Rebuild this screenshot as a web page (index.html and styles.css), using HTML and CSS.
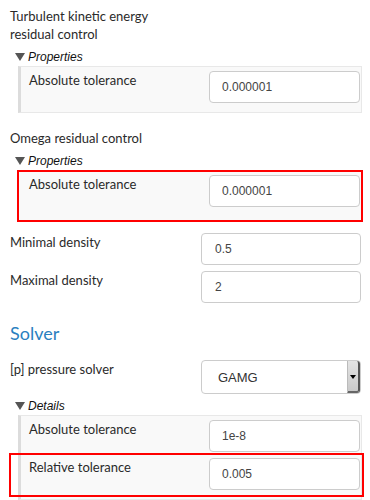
FILE: index.html
```html
<!DOCTYPE html>
<html lang="en">

<head>
    <meta charset="UTF-8">
    <meta name="viewport" content="width=device-width, initial-scale=1.0">
    <title>Solver settings</title>
    <link rel="stylesheet" href="styles.css">
</head>

<body>
    <div class="page">
        <div class="group-title">Turbulent kinetic energy residual control</div>
        <div class="toggle"><span class="caret"></span>Properties</div>
        <div class="props">
            <div class="field">
                <span class="field-label">Absolute tolerance</span>
                <input class="field-input" type="text" value="0.000001">
            </div>
        </div>

        <div class="group-title">Omega residual control</div>
        <div class="toggle"><span class="caret"></span>Properties</div>
        <div class="props props-marked">
            <div class="field">
                <span class="field-label">Absolute tolerance</span>
                <input class="field-input" type="text" value="0.000001">
            </div>
        </div>

        <div class="top-fields">
            <div class="field">
                <span class="field-label">Minimal density</span>
                <input class="field-input wide" type="text" value="0.5">
            </div>
            <div class="field">
                <span class="field-label">Maximal density</span>
                <input class="field-input wide" type="text" value="2">
            </div>
        </div>

        <h2 class="section">Solver</h2>
        <div class="field select-row">
            <span class="field-label">[p] pressure solver</span>
            <div class="select">
                <span>GAMG</span>
                <span class="select-btn"><span class="select-arrow"></span></span>
            </div>
        </div>

        <div class="toggle toggle-details"><span class="caret"></span>Details</div>
        <div class="props props-list">
            <div class="field">
                <span class="field-label">Absolute tolerance</span>
                <input class="field-input" type="text" value="1e-8">
            </div>
            <div class="field field-marked">
                <span class="field-label">Relative tolerance</span>
                <input class="field-input" type="text" value="0.005">
            </div>
        </div>
    </div>
</body>

</html>
```

FILE: styles.css
```css
body {
    margin: 0;
    font-family: Lato, "Liberation Sans", sans-serif;
    font-size: 13px;
    color: #2a2a2a;
    background: #fff;
}

.page {
    padding: 7px 8px 0 10px;
}

.group-title {
    width: 170px;
    line-height: 18px;
}

.toggle {
    display: flex;
    align-items: center;
    height: 18px;
    margin: 5px 0 0 5px;
    font: italic 12px "Liberation Sans", Arial, sans-serif;
    color: #111;
}

.caret {
    width: 0;
    height: 0;
    border-left: 5px solid transparent;
    border-right: 5px solid transparent;
    border-top: 8px solid #555;
    margin-right: 3px;
}

.props {
    margin: 0 0 16px 8px;
    padding: 4px 1px 9px 8px;
    background: #f9f9f9;
    border: 1px solid #e8e8e8;
    border-left: 3px solid #dcdcdc;
}

.props-marked {
    margin: 0 -1px 11px 7px;
    padding: 3px 1px 13px 10px;
    border: 2px solid #f00;
}

.field {
    display: flex;
    justify-content: space-between;
    align-items: flex-start;
}

.field-label {
    line-height: 18px;
}

.field-input {
    box-sizing: border-box;
    width: 151px;
    height: 32px;
    padding: 0 8px 0 12px;
    border: 1px solid #ccc;
    border-radius: 4px;
    background: #fff;
    font: 12px "Liberation Sans", Arial, sans-serif;
    color: #444;
    outline: none;
}

.field-input.wide {
    width: 160px;
    margin-right: 1px;
    padding-left: 13px;
}

.top-fields {
    display: flex;
    flex-direction: column;
    gap: 6px;
}

.section {
    margin: 18px 0 0;
    font-size: 18px;
    font-weight: normal;
    line-height: 24px;
    color: #2a7fc0;
}

.select-row {
    margin-top: 15px;
}

.select {
    box-sizing: border-box;
    display: flex;
    align-items: center;
    justify-content: space-between;
    width: 160px;
    height: 34px;
    margin-right: 1px;
    padding: 0 0 0 16px;
    border: 1px solid #ccc;
    border-radius: 4px;
    font: 13px "Liberation Sans", Arial, sans-serif;
    color: #333;
}

.select-btn {
    box-sizing: border-box;
    display: flex;
    align-items: center;
    justify-content: center;
    width: 13px;
    height: 32px;
    background: linear-gradient(#e4e4e4, #c9c9c9);
    border-left: 1px solid #bbb;
    border-right: 2px solid #555;
    border-bottom: 2px solid #666;
    border-radius: 0 3px 3px 0;
}

.select-arrow {
    width: 0;
    height: 0;
    border-left: 3px solid transparent;
    border-right: 3px solid transparent;
    border-top: 4px solid #000;
    margin-top: 2px;
}

.toggle-details {
    margin-top: 3px;
}

.props-list {
    display: flex;
    flex-direction: column;
    gap: 6px;
    margin-bottom: 0;
}

.field-marked {
    position: relative;
}

/* annotation box drawn over the row */
.field-marked::after {
    content: "";
    position: absolute;
    top: -5px;
    bottom: -7px;
    left: -20px;
    right: -4px;
    border: 2px solid #f00;
}
```
